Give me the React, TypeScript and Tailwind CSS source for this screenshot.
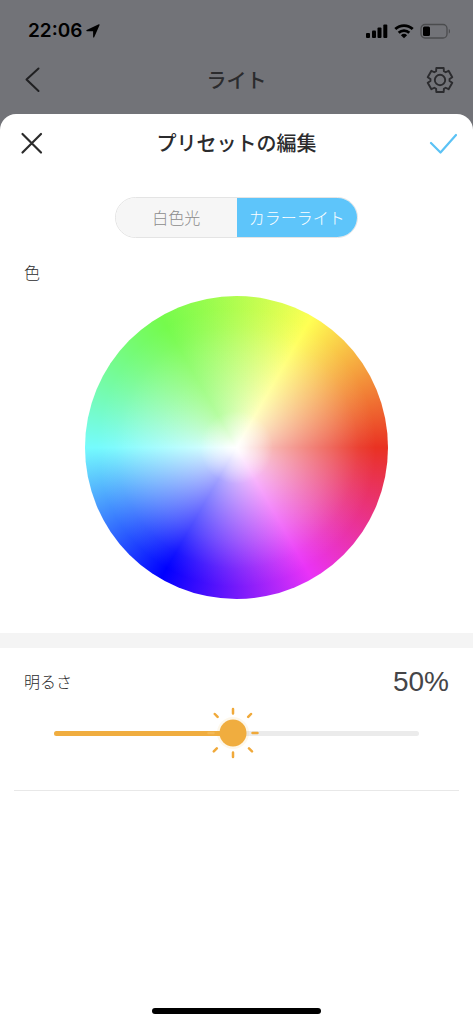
import { useState } from 'react';

const tabs = [
  { id: 'white', label: '白色光' },
  { id: 'color', label: 'カラーライト' },
];

const MIN_BRIGHTNESS = 2;
const MAX_BRIGHTNESS = 100;

// Six teeth, four points each: two on the tip, two at the root
const gearPoints = Array.from({ length: 6 })
  .flatMap((_, i) =>
    [
      [-24, 9.6],
      [-17, 12.6],
      [17, 12.6],
      [24, 9.6],
    ].map(([offset, radius]) => {
      const angle = ((i * 60 + offset) * Math.PI) / 180;
      return `${(14 + radius * Math.sin(angle)).toFixed(2)},${(14 - radius * Math.cos(angle)).toFixed(2)}`;
    })
  )
  .join(' ');

function StatusBar() {
  return (
    <div className="flex h-[62px] items-center justify-between pl-7 pr-[22px] text-black">
      <div className="flex items-center gap-1">
        <span className="font-['Inter',sans-serif] text-[19px] font-semibold leading-6">22:06</span>
        <svg className="h-[14px] w-[14px]" viewBox="0 0 14 14" fill="currentColor" aria-hidden="true">
          <path d="M13.6.9 8.2 13.2c-.3.6-1.100.5-1.100-.2V7.200H1C.2 7.200.1 6.400.7 6.100L12.800.2c.6-.2 1 .1.8.7z" />
        </svg>
      </div>
      <div className="flex items-center gap-[6px]">
        <svg className="h-4 w-[22px]" viewBox="0 0 22 16" fill="currentColor" aria-hidden="true">
          <rect x="0" y="10" width="4" height="5" rx="1" />
          <rect x="6" y="7.500" width="4" height="7.500" rx="1" />
          <rect x="11.500" y="4.500" width="4" height="10.500" rx="1" />
          <rect x="17.300" y="1.500" width="4" height="13.500" rx="1" />
        </svg>
        <svg className="h-4 w-5" viewBox="0 0 20 16" fill="none" stroke="currentColor" strokeWidth="2.800" aria-hidden="true">
          <path d="M1.300 6.100a12.500 12.500 0 0 1 17.400 0" />
          <path d="M4.700 9.700a7.700 7.700 0 0 1 10.600 0" />
          <path d="M10 15.200 6.900 12.200a4.500 4.500 0 0 1 6.200 0z" fill="currentColor" stroke="none" />
        </svg>
        <svg className="h-4 w-[31px]" viewBox="0 0 31 16" fill="none" aria-hidden="true">
          <rect x="1" y="1.500" width="26" height="13.500" rx="4" stroke="#4b4c4e" strokeWidth="1.300" />
          <rect x="3" y="3.500" width="7" height="9.500" rx="1.500" fill="#000" />
          <path d="M28.800 6v4.500c1.600-.6 1.600-3.900 0-4.500z" fill="#4b4c4e" />
        </svg>
      </div>
    </div>
  );
}

// Layers from the top: white core, green boost, white falloff, hues
function ColorWheel() {
  return (
    <div
      role="img"
      aria-label="色"
      className="mx-auto aspect-square w-[303px] rounded-full bg-[radial-gradient(closest-side,#ffffff_0%,#ffffff80_9%,#ffffff00_24%),conic-gradient(from_270deg,#75fb4c00,#75fb4c40_60deg,#75fb4c00_120deg,#75fb4c00),radial-gradient(closest-side,#ffffffe0_0%,#ffffff94_30%,#ffffff45_62%,#ffffff14_80%,#ffffff00_92%),conic-gradient(from_30deg,#ffff54,#e93223_60deg,#ea33f7_120deg,#0000ff_180deg,#75fbfd_240deg,#75fb4c_300deg,#ffff54)]"
    />
  );
}

function BrightnessSlider({ value, onChange }: { value: number; onChange: (value: number) => void }) {
  const percent = ((value - MIN_BRIGHTNESS) / (MAX_BRIGHTNESS - MIN_BRIGHTNESS)) * 100;

  return (
    <div className="relative mx-[54px] h-14">
      <div className="flex h-full items-center">
        <div className="h-[5px] w-full overflow-hidden rounded-full bg-[#ebebeb]">
          <div className="h-full bg-[#f0ad3f]" style={{ width: `${percent}%` }} />
        </div>
      </div>
      <svg
        className="pointer-events-none absolute top-0 h-14 w-14 -translate-x-1/2"
        style={{ left: `${percent}%` }}
        viewBox="0 0 56 56"
        fill="none"
        stroke="#f0a93a"
        strokeWidth="2.500"
        strokeLinecap="round"
        aria-hidden="true"
      >
        <circle cx="28" cy="28" r="16" fill="#f0ad3f" fillOpacity="0.100" stroke="none" />
        <circle cx="28" cy="28" r="13.500" fill="#f0ad3f" stroke="none" />
        <path d="M28 4v4.500M28 47.500v4.500M9.800 9l2.800 2.900M46 9l-2.800 2.900M8.800 46.300l3-2.900M47 46.300l-3-2.900M47.500 28h5" />
        <path d="M3.500 28h5" stroke="#f3b957" />
      </svg>
      <input
        id="brightness"
        type="range"
        min={MIN_BRIGHTNESS}
        max={MAX_BRIGHTNESS}
        value={value}
        onChange={(e) => onChange(Number(e.target.value))}
        className="absolute inset-0 h-full w-full cursor-pointer opacity-0"
      />
    </div>
  );
}

export default function App() {
  const [activeTab, setActiveTab] = useState('color');
  const [brightness, setBrightness] = useState(50);

  return (
    <div className="flex min-h-screen flex-col bg-[#727378] font-['Noto_Sans_CJK_JP',sans-serif] text-[#2b2b2d]">
      <StatusBar />

      {/* Screen behind the sheet */}
      <header className="flex h-9 items-center justify-between px-[19px]">
        <button type="button" aria-label="戻る" className="flex h-7 w-7 items-center justify-start">
          <svg className="h-7 w-6" viewBox="0 0 24 28" fill="none" stroke="#202022" strokeWidth="2" strokeLinecap="round" strokeLinejoin="round">
            <path d="M19.500 2.500 7.500 13.500l12 11.500" />
          </svg>
        </button>
        <h2 className="text-xl font-medium leading-7">ライト</h2>
        <button type="button" aria-label="設定" className="flex h-7 w-7 items-center justify-center">
          <svg className="h-7 w-7" viewBox="0 0 28 28" fill="none" stroke="#2b2b2e" strokeWidth="1.900" strokeLinejoin="round">
            <polygon points={gearPoints} />
            <circle cx="14" cy="14" r="5.200" />
          </svg>
        </button>
      </header>

      {/* Sheet */}
      <main className="mt-4 flex flex-1 flex-col rounded-t-2xl bg-white">
        <div className="flex h-[58px] items-center justify-between px-4">
          <button type="button" aria-label="閉じる" className="h-7 w-7">
            <svg className="h-7 w-7" viewBox="0 0 28 28" fill="none" stroke="#2b2b2b" strokeWidth="2.200" strokeLinecap="round">
              <path d="m6.500 5 18.500 18.500M25 5 6.500 23.500" />
            </svg>
          </button>
          <h1 className="text-xl font-medium leading-7">プリセットの編集</h1>
          <button type="button" aria-label="保存" className="h-7 w-7">
            <svg className="h-7 w-7" viewBox="0 0 28 28" fill="none" stroke="#5bc2f5" strokeWidth="2.200" strokeLinecap="round" strokeLinejoin="round">
              <path d="m2 14 9.500 9.500L27 6" />
            </svg>
          </button>
        </div>

        <div className="mx-auto mt-[25px] flex h-[41px] w-[243px] overflow-hidden rounded-full border border-[#e4e4e4]">
          {tabs.map((tab) => (
            <button
              key={tab.id}
              type="button"
              aria-pressed={activeTab === tab.id}
              onClick={() => setActiveTab(tab.id)}
              className={`flex-1 pb-[2px] text-base font-light ${
                activeTab === tab.id ? 'bg-[#5ec5fa] text-white' : 'bg-[#f6f6f6] text-[#8c8c8c]'
              }`}
            >
              {tab.label}
            </button>
          ))}
        </div>

        <section className="pb-[34px] pt-[22px]">
          <h3 className="mb-3 px-6 text-base font-light leading-6">色</h3>
          <ColorWheel />
        </section>

        <div className="h-[15px] bg-[#f4f4f4]" />

        <section className="mx-[14px] border-b border-[#e8e8e8] pb-[29px] pt-4">
          <div className="flex h-9 items-center justify-between px-[10px]">
            <label htmlFor="brightness" className="pb-[2px] text-base font-light">
              明るさ
            </label>
            <output htmlFor="brightness" className="font-['Liberation_Sans',sans-serif] text-[28px] leading-9 text-[#454548]">
              {brightness}%
            </output>
          </div>
          <div className="-mx-[14px] mt-[5px]">
            <BrightnessSlider value={brightness} onChange={setBrightness} />
          </div>
        </section>

        <div className="mx-auto mb-[10px] mt-auto h-[6px] w-[169px] rounded-full bg-black" />
      </main>
    </div>
  );
}
